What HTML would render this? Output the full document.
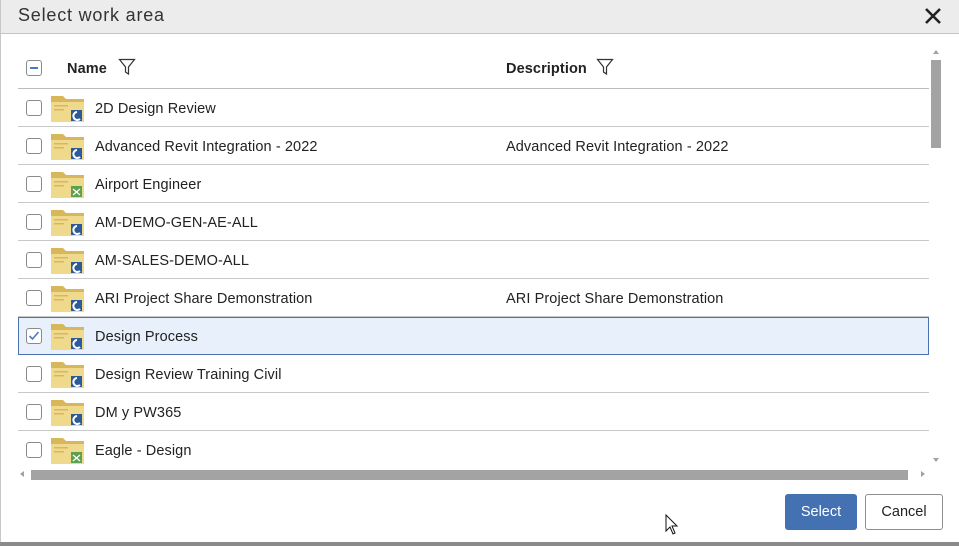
<!DOCTYPE html><html><head><style>
*{box-sizing:border-box;margin:0;padding:0}
body{width:959px;height:546px;background:#fff;font-family:"Liberation Sans","DejaVu Sans",sans-serif;color:#222;position:relative;overflow:hidden}
.hdr{position:absolute;left:0;top:0;width:959px;height:34px;background:#ececec;border-bottom:1px solid #c4c4c4;border-left:1px solid #c8c8c8}
.hdr span{position:absolute;left:17px;top:5px;font-size:18px;letter-spacing:0.8px;color:#333}
.close{position:absolute;right:16px;top:6px}
.lb{position:absolute;left:0;top:34px;width:1px;height:510px;background:#c8c8c8}
.bb{position:absolute;left:0;top:542px;width:959px;height:4px;background:#8a8a8a}
.row{position:absolute;left:18px;width:911px;height:38px;border-bottom:1px solid #c9c9c9;font-size:14.5px;letter-spacing:0.1px}
.row .t{position:absolute;left:77px;top:12px}
.row .d{position:absolute;left:488px;top:12px}
.cb{position:absolute;left:8px;top:11px;width:16px;height:16px;border:1px solid #8a8a8a;border-radius:3px;background:#fff}
.fold{position:absolute;left:33px;top:5px}
.sel{background:#e8f1fb;border:1px solid #4a72b0}
</style></head><body>
<div class="hdr"><span>Select work area</span>
<svg class="close" width="20" height="20" viewBox="0 0 20 20"><path d="M3 3L17 17M17 3L3 17" stroke="#222" stroke-width="2.6"/></svg></div>
<div class="lb"></div>
<div class="row" style="top:50px;height:39px;border-bottom:1px solid #bbb">
<div class="cb" style="top:10px"><div style="position:absolute;left:3px;top:6px;width:8px;height:2px;background:#4a78c8"></div></div>
<b style="position:absolute;left:49px;top:11px;font-size:14.5px">Name</b>
<svg style="position:absolute;left:100px;top:8px" width="18" height="18" viewBox="0 0 18 18"><path d="M1.5 1.5H16.5L10.5 9V16L7.5 14V9Z" fill="none" stroke="#333" stroke-width="1.2"/></svg>
<b style="position:absolute;left:488px;top:11px;font-size:14.5px">Description</b>
<svg style="position:absolute;left:578px;top:8px" width="18" height="18" viewBox="0 0 18 18"><path d="M1.5 1.5H16.5L10.5 9V16L7.5 14V9Z" fill="none" stroke="#333" stroke-width="1.2"/></svg>
</div>
<div class="row" style="top:89px"><div class="cb"></div><svg class="fold" width="33" height="28"><path d="M0 2h12l3 3h18v23H0z" fill="#d8b75a"/><rect x="0" y="8" width="33" height="20" fill="#efd98c"/><rect x="3" y="11" width="14" height="1.5" fill="#d8b75a"/><rect x="3" y="15" width="10" height="1.5" fill="#d8b75a"/><rect x="20" y="16" width="11" height="11" fill="#2d5a9a"/><path d="M26 18a4 4 0 1 0 3 7" stroke="#fff" stroke-width="2" fill="none"/></svg><span class="t">2D Design Review</span></div>
<div class="row" style="top:127px"><div class="cb"></div><svg class="fold" width="33" height="28"><path d="M0 2h12l3 3h18v23H0z" fill="#d8b75a"/><rect x="0" y="8" width="33" height="20" fill="#efd98c"/><rect x="3" y="11" width="14" height="1.5" fill="#d8b75a"/><rect x="3" y="15" width="10" height="1.5" fill="#d8b75a"/><rect x="20" y="16" width="11" height="11" fill="#2d5a9a"/><path d="M26 18a4 4 0 1 0 3 7" stroke="#fff" stroke-width="2" fill="none"/></svg><span class="t">Advanced Revit Integration - 2022</span><span class="d">Advanced Revit Integration - 2022</span></div>
<div class="row" style="top:165px"><div class="cb"></div><svg class="fold" width="33" height="28"><path d="M0 2h12l3 3h18v23H0z" fill="#d8b75a"/><rect x="0" y="8" width="33" height="20" fill="#efd98c"/><rect x="3" y="11" width="14" height="1.5" fill="#d8b75a"/><rect x="3" y="15" width="10" height="1.5" fill="#d8b75a"/><rect x="20" y="16" width="11" height="11" fill="#5fa04e"/><path d="M22 19l7 6M22 25l7-6" stroke="#fff" stroke-width="1.3"/></svg><span class="t">Airport Engineer</span></div>
<div class="row" style="top:203px"><div class="cb"></div><svg class="fold" width="33" height="28"><path d="M0 2h12l3 3h18v23H0z" fill="#d8b75a"/><rect x="0" y="8" width="33" height="20" fill="#efd98c"/><rect x="3" y="11" width="14" height="1.5" fill="#d8b75a"/><rect x="3" y="15" width="10" height="1.5" fill="#d8b75a"/><rect x="20" y="16" width="11" height="11" fill="#2d5a9a"/><path d="M26 18a4 4 0 1 0 3 7" stroke="#fff" stroke-width="2" fill="none"/></svg><span class="t">AM-DEMO-GEN-AE-ALL</span></div>
<div class="row" style="top:241px"><div class="cb"></div><svg class="fold" width="33" height="28"><path d="M0 2h12l3 3h18v23H0z" fill="#d8b75a"/><rect x="0" y="8" width="33" height="20" fill="#efd98c"/><rect x="3" y="11" width="14" height="1.5" fill="#d8b75a"/><rect x="3" y="15" width="10" height="1.5" fill="#d8b75a"/><rect x="20" y="16" width="11" height="11" fill="#2d5a9a"/><path d="M26 18a4 4 0 1 0 3 7" stroke="#fff" stroke-width="2" fill="none"/></svg><span class="t">AM-SALES-DEMO-ALL</span></div>
<div class="row" style="top:279px"><div class="cb"></div><svg class="fold" width="33" height="28"><path d="M0 2h12l3 3h18v23H0z" fill="#d8b75a"/><rect x="0" y="8" width="33" height="20" fill="#efd98c"/><rect x="3" y="11" width="14" height="1.5" fill="#d8b75a"/><rect x="3" y="15" width="10" height="1.5" fill="#d8b75a"/><rect x="20" y="16" width="11" height="11" fill="#2d5a9a"/><path d="M26 18a4 4 0 1 0 3 7" stroke="#fff" stroke-width="2" fill="none"/></svg><span class="t">ARI Project Share Demonstration</span><span class="d">ARI Project Share Demonstration</span></div>
<div class="row sel" style="top:317px"><div class="cb" style="left:7px;top:10px"><svg width="14" height="14" style="position:absolute;left:0;top:0"><path d="M2.5 7l3 3 6-7" stroke="#4a78c8" stroke-width="1.6" fill="none"/></svg></div><svg class="fold" style="left:32px;top:4px" width="33" height="28"><path d="M0 2h12l3 3h18v23H0z" fill="#d8b75a"/><rect x="0" y="8" width="33" height="20" fill="#efd98c"/><rect x="3" y="11" width="14" height="1.5" fill="#d8b75a"/><rect x="3" y="15" width="10" height="1.5" fill="#d8b75a"/><rect x="20" y="16" width="11" height="11" fill="#2d5a9a"/><path d="M26 18a4 4 0 1 0 3 7" stroke="#fff" stroke-width="2" fill="none"/></svg><span class="t" style="left:76px;top:11px">Design Process</span></div>
<div class="row" style="top:355px"><div class="cb"></div><svg class="fold" width="33" height="28"><path d="M0 2h12l3 3h18v23H0z" fill="#d8b75a"/><rect x="0" y="8" width="33" height="20" fill="#efd98c"/><rect x="3" y="11" width="14" height="1.5" fill="#d8b75a"/><rect x="3" y="15" width="10" height="1.5" fill="#d8b75a"/><rect x="20" y="16" width="11" height="11" fill="#2d5a9a"/><path d="M26 18a4 4 0 1 0 3 7" stroke="#fff" stroke-width="2" fill="none"/></svg><span class="t">Design Review Training Civil</span></div>
<div class="row" style="top:393px"><div class="cb"></div><svg class="fold" width="33" height="28"><path d="M0 2h12l3 3h18v23H0z" fill="#d8b75a"/><rect x="0" y="8" width="33" height="20" fill="#efd98c"/><rect x="3" y="11" width="14" height="1.5" fill="#d8b75a"/><rect x="3" y="15" width="10" height="1.5" fill="#d8b75a"/><rect x="20" y="16" width="11" height="11" fill="#2d5a9a"/><path d="M26 18a4 4 0 1 0 3 7" stroke="#fff" stroke-width="2" fill="none"/></svg><span class="t">DM y PW365</span></div>
<div class="row" style="top:431px;height:36px;border-bottom:none"><div class="cb"></div><svg class="fold" width="33" height="28"><path d="M0 2h12l3 3h18v23H0z" fill="#d8b75a"/><rect x="0" y="8" width="33" height="20" fill="#efd98c"/><rect x="3" y="11" width="14" height="1.5" fill="#d8b75a"/><rect x="3" y="15" width="10" height="1.5" fill="#d8b75a"/><rect x="20" y="16" width="11" height="11" fill="#5fa04e"/><path d="M22 19l7 6M22 25l7-6" stroke="#fff" stroke-width="1.3"/></svg><span class="t">Eagle - Design</span></div>
<div style="position:absolute;left:933px;top:50px;width:0;height:0;border-left:3px solid transparent;border-right:3px solid transparent;border-bottom:4px solid #a0a0a0"></div>
<div style="position:absolute;left:931px;top:60px;width:10px;height:88px;background:#a3a3a3"></div>
<div style="position:absolute;left:933px;top:458px;width:0;height:0;border-left:3px solid transparent;border-right:3px solid transparent;border-top:4px solid #a0a0a0"></div>
<div style="position:absolute;left:20px;top:471px;width:0;height:0;border-top:3px solid transparent;border-bottom:3px solid transparent;border-right:4px solid #a0a0a0"></div>
<div style="position:absolute;left:31px;top:470px;width:877px;height:10px;background:#a3a3a3"></div>
<div style="position:absolute;left:921px;top:471px;width:0;height:0;border-top:3px solid transparent;border-bottom:3px solid transparent;border-left:4px solid #a0a0a0"></div>
<div style="position:absolute;left:785px;top:494px;width:72px;height:36px;background:#4471b1;border-radius:3px;color:#fff;font-size:14.5px;text-align:center;line-height:37px">Select</div>
<div style="position:absolute;left:865px;top:494px;width:78px;height:36px;border:1px solid #8e8e8e;border-radius:3px;color:#222;font-size:14.5px;text-align:center;line-height:35px;background:#fff">Cancel</div>
<svg style="position:absolute;left:665px;top:514px" width="14" height="22" viewBox="0 0 14 22"><path d="M1 1V17L5 13L8 20L10 19L7 12H12Z" fill="#fff" stroke="#111" stroke-width="1"/></svg>
<div class="bb"></div>
</body></html>
